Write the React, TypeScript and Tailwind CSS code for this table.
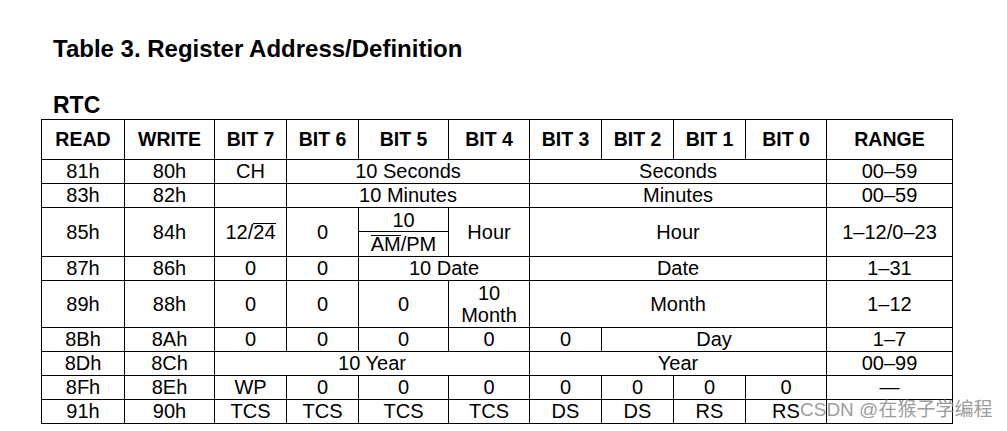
import React from "react";

type CellDef = { text: React.ReactNode; span?: 1 | 2 | 3 | 4 };

const spanClass: Record<number, string> = {
  1: "",
  2: "col-span-2",
  3: "col-span-3",
  4: "col-span-4",
};

const headers = ["READ", "WRITE", "BIT 7", "BIT 6", "BIT 5", "BIT 4", "BIT 3", "BIT 2", "BIT 1", "BIT 0", "RANGE"];

// bar over active-low signal names
function Bar({ children }: { children: React.ReactNode }) {
  return <span className="inline-block border-t border-black leading-[17px]">{children}</span>;
}

const ampm = (
  <div className="flex flex-col w-full h-full">
    <div className="h-[24px] flex items-center justify-center border-b border-black">10</div>
    <div className="flex-1 flex items-center justify-center">
      <Bar>AM</Bar>/PM
    </div>
  </div>
);

const rows: CellDef[][] = [
  [{ text: "81h" }, { text: "80h" }, { text: "CH" }, { text: "10 Seconds", span: 3 }, { text: "Seconds", span: 4 }, { text: "00–59" }],
  [{ text: "83h" }, { text: "82h" }, { text: "" }, { text: "10 Minutes", span: 3 }, { text: "Minutes", span: 4 }, { text: "00–59" }],
  [
    { text: "85h" },
    { text: "84h" },
    { text: <>12/<Bar>24</Bar></> },
    { text: "0" },
    { text: ampm },
    { text: "Hour" },
    { text: "Hour", span: 4 },
    { text: "1–12/0–23" },
  ],
  [{ text: "87h" }, { text: "86h" }, { text: "0" }, { text: "0" }, { text: "10 Date", span: 2 }, { text: "Date", span: 4 }, { text: "1–31" }],
  [
    { text: "89h" },
    { text: "88h" },
    { text: "0" },
    { text: "0" },
    { text: "0" },
    { text: <span className="leading-[22px]">10<br />Month</span> },
    { text: "Month", span: 4 },
    { text: "1–12" },
  ],
  [{ text: "8Bh" }, { text: "8Ah" }, { text: "0" }, { text: "0" }, { text: "0" }, { text: "0" }, { text: "0" }, { text: "Day", span: 3 }, { text: "1–7" }],
  [{ text: "8Dh" }, { text: "8Ch" }, { text: "10 Year", span: 4 }, { text: "Year", span: 4 }, { text: "00–99" }],
  [
    { text: "8Fh" }, { text: "8Eh" }, { text: "WP" }, { text: "0" }, { text: "0" }, { text: "0" },
    { text: "0" }, { text: "0" }, { text: "0" }, { text: "0" }, { text: "—" },
  ],
  [
    { text: "91h" }, { text: "90h" }, { text: "TCS" }, { text: "TCS" }, { text: "TCS" }, { text: "TCS" },
    { text: "DS" }, { text: "DS" }, { text: "RS" }, { text: "RS" }, { text: "" },
  ],
];

export default function App() {
  return (
    <div className="relative w-[1007px] h-[431px] bg-white text-black overflow-hidden font-['Liberation_Sans',Arial,sans-serif]">
      <div className="pl-[41px] flex flex-col">
        <h1 className="ml-[12px] mt-[37px] text-[24px] leading-none font-bold">Table 3. Register Address/Definition</h1>
        <h2 className="ml-[12px] mt-[33px] text-[23px] leading-none font-bold">RTC</h2>

        {/* register table */}
        <div className="mt-[2px] w-fit grid gap-px p-px bg-black grid-cols-[82px_89px_71px_71px_89px_80px_71px_71px_71px_80px_125px] grid-rows-[39px_23px_23px_48px_23px_46px_23px_23px_23px_23px]">
          {headers.map((h) => (
            <div key={h} className="bg-white flex items-center justify-center text-[19.5px] font-bold leading-none">
              {h}
            </div>
          ))}
          {rows.map((row, ri) =>
            row.map((cell, ci) => (
              <div
                key={`${ri}-${ci}`}
                className={`bg-white flex items-center justify-center text-center text-[20px] leading-none pb-px ${spanClass[cell.span ?? 1]}`}
              >
                {cell.text}
              </div>
            ))
          )}
        </div>
      </div>

      {/* watermark */}
      <div className="absolute left-[800px] top-[400px] text-[19px] leading-none text-[#8f8f8f]/90 font-['Liberation_Sans','Noto_Sans_CJK_SC',sans-serif] whitespace-nowrap">
        CSDN @在猴子学编程
      </div>
    </div>
  );
}
